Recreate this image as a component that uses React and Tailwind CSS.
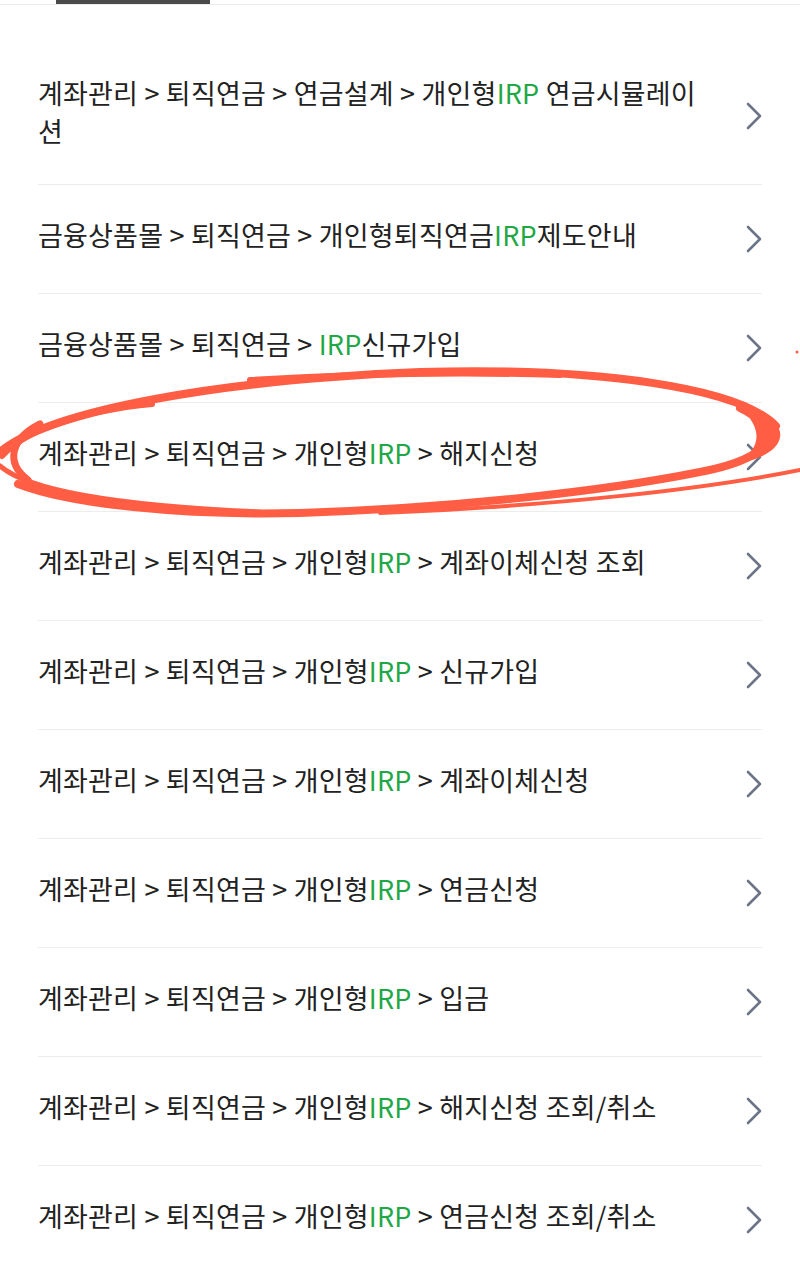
import React from "react";

const rows = [
  ["계좌관리 > 퇴직연금 > 연금설계 > 개인형", "IRP", " 연금시뮬레이션"],
  ["금융상품몰 > 퇴직연금 > 개인형퇴직연금", "IRP", "제도안내"],
  ["금융상품몰 > 퇴직연금 > ", "IRP", "신규가입"],
  ["계좌관리 > 퇴직연금 > 개인형", "IRP", " > 해지신청"],
  ["계좌관리 > 퇴직연금 > 개인형", "IRP", " > 계좌이체신청 조회"],
  ["계좌관리 > 퇴직연금 > 개인형", "IRP", " > 신규가입"],
  ["계좌관리 > 퇴직연금 > 개인형", "IRP", " > 계좌이체신청"],
  ["계좌관리 > 퇴직연금 > 개인형", "IRP", " > 연금신청"],
  ["계좌관리 > 퇴직연금 > 개인형", "IRP", " > 입금"],
  ["계좌관리 > 퇴직연금 > 개인형", "IRP", " > 해지신청 조회/취소"],
  ["계좌관리 > 퇴직연금 > 개인형", "IRP", " > 연금신청 조회/취소"],
];

function Chevron() {
  return (
    <svg width="16" height="28" viewBox="0 0 16 28" className="shrink-0">
      <path d="M2 2 L14 14 L2 26" fill="none" stroke="#6b7587" strokeWidth="2.6" strokeLinecap="round" strokeLinejoin="round" />
    </svg>
  );
}

export default function App() {
  return (
    <div
      className="relative w-[800px] h-[1266px] overflow-hidden bg-white text-[#222]"
      style={{ fontFamily: '"Noto Sans CJK KR", "Noto Sans", sans-serif' }}
    >
      <div className="h-[5px] border-b border-[#ececec] pl-[56px]">
        <div className="w-[154px] h-[4px] bg-[#4a4a4a]" />
      </div>
      <ul className="mt-[38px] px-[38px]">
        {rows.map((r, i) => (
          <li
            key={i}
            className={
              "flex items-center " +
              (i === 0 ? "pt-[31px] pb-[26px] " : "py-[31px] ") +
              (i < rows.length - 1 ? "border-b border-[#ededed]" : "")
            }
          >
            <div className="flex-1 text-[27px] leading-[38px] tracking-[0.2px] pb-[8px] pr-[30px]">
              {r[0]}
              <span className="text-[#1fa845]">{r[1]}</span>
              {r[2]}
            </div>
            <Chevron />
          </li>
        ))}
      </ul>

      <svg
        className="absolute left-0 top-0 pointer-events-none"
        width="800"
        height="1266"
        viewBox="0 0 800 1266"
      >
        <g fill="none" stroke="#ff5e45" strokeLinecap="round" strokeLinejoin="round">
          <path d="M0 452 C50 410 220 380 420 372 C600 367 740 388 776 426" strokeWidth="8" />
          <path d="M250 380 C350 374 460 372 560 375" strokeWidth="6" />
          <path d="M740 408 C785 430 775 458 700 472 C600 492 450 508 300 513 C180 516 70 504 18 484" strokeWidth="8" />
          <path d="M152 404 C90 410 30 426 2 456" strokeWidth="6" />
          <path d="M40 424 C12 438 4 462 28 480" strokeWidth="7" />
          <path d="M0 466 C30 492 120 506 260 512" strokeWidth="5" />
          <path d="M380 513 C550 506 700 490 800 470" strokeWidth="4" />
          <path d="M730 400 C775 412 792 432 772 450 C762 458 748 462 738 463 C762 448 766 425 730 400 Z" fill="#ff5e45" stroke="none" />
          <circle cx="797" cy="352" r="1.5" fill="#ff5e45" stroke="none" />
        </g>
      </svg>
    </div>
  );
}
